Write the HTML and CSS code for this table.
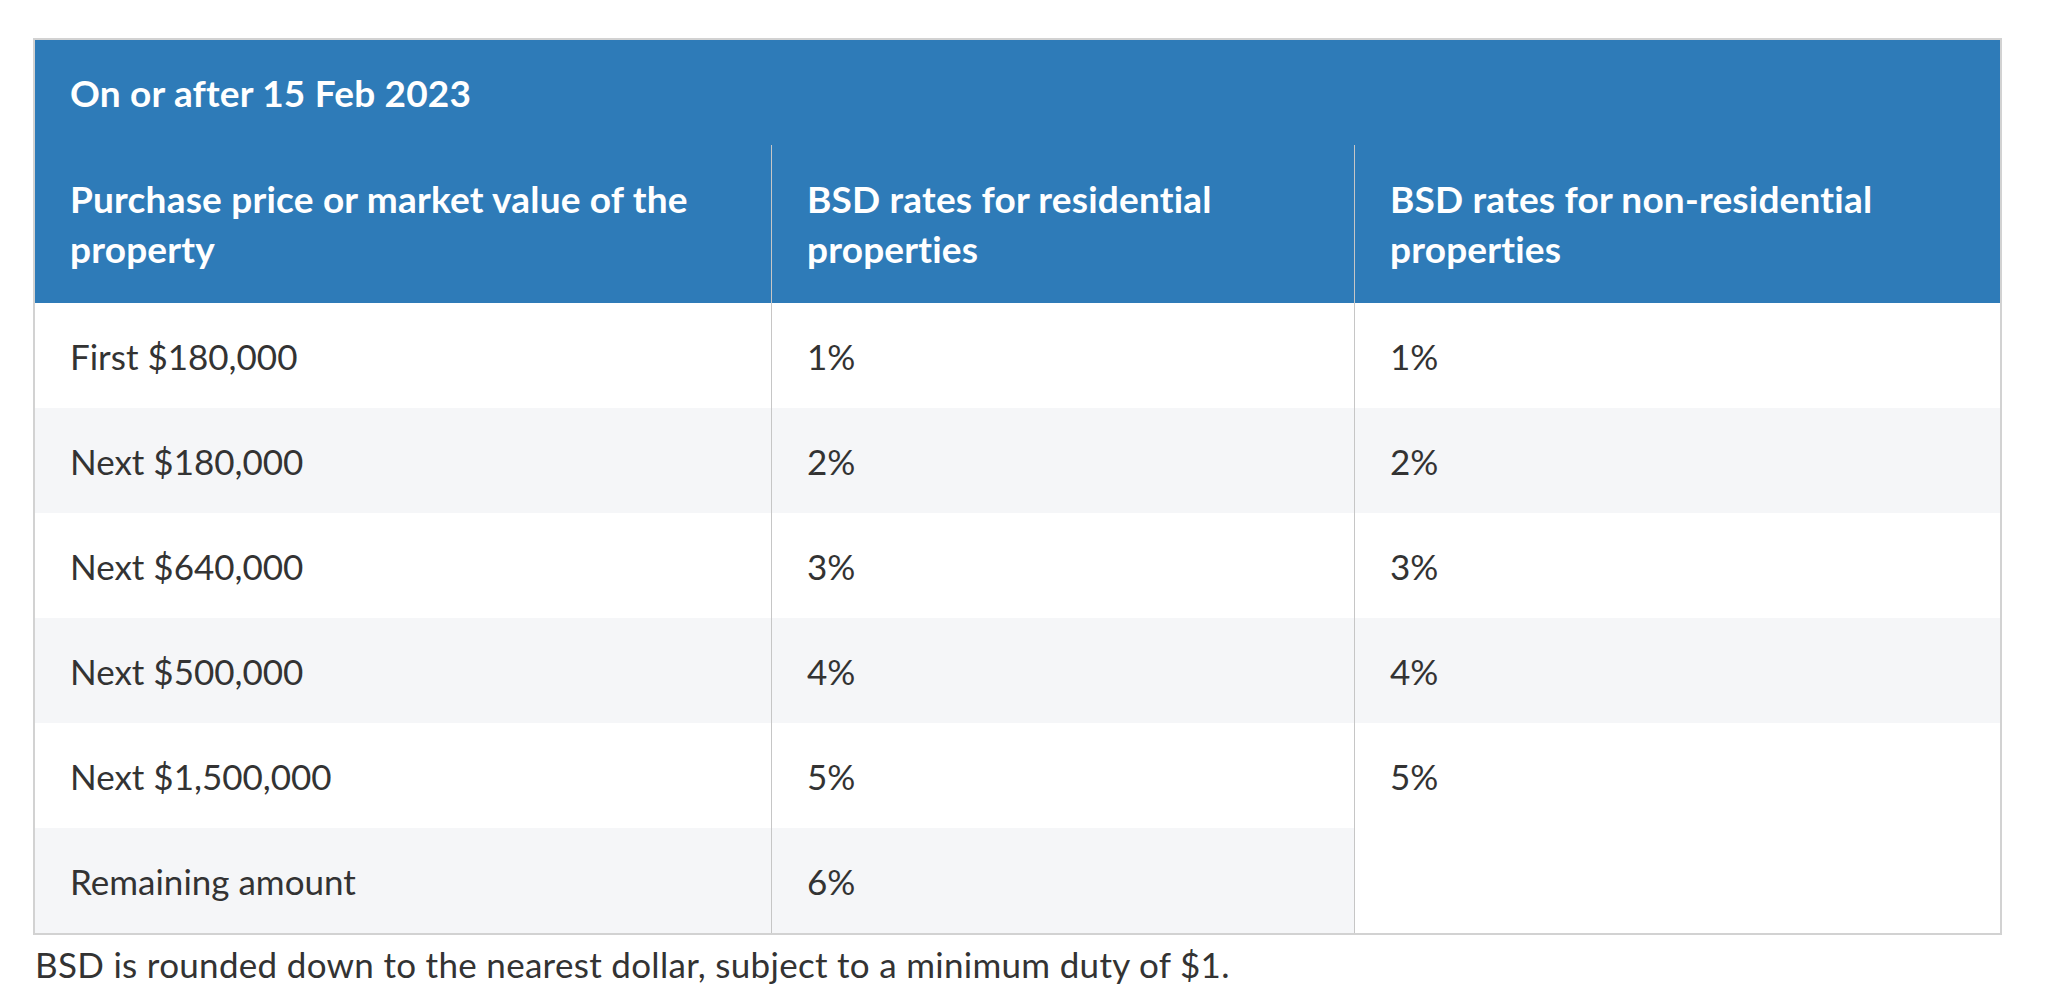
FILE: index.html
```html
<!DOCTYPE html>
<html lang="en">
<head>
<meta charset="utf-8">
<title>BSD rates</title>
<link rel="stylesheet" href="styles.css">
</head>
<body>
<main class="page">
  <table class="rates">
    <colgroup>
      <col class="col-price">
      <col class="col-res">
      <col class="col-nonres">
    </colgroup>
    <thead>
      <tr class="title-row">
        <th colspan="3" class="title-cell">On or after 15 Feb 2023</th>
      </tr>
      <tr class="head-row">
        <th>Purchase price or market value of the<br>property</th>
        <th class="div">BSD rates for residential<br>properties</th>
        <th class="div">BSD rates for non-residential<br>properties</th>
      </tr>
    </thead>
    <tbody>
      <tr>
        <td>First $180,000</td>
        <td class="div">1%</td>
        <td class="div">1%</td>
      </tr>
      <tr class="alt">
        <td>Next $180,000</td>
        <td class="div">2%</td>
        <td class="div">2%</td>
      </tr>
      <tr>
        <td>Next $640,000</td>
        <td class="div">3%</td>
        <td class="div">3%</td>
      </tr>
      <tr class="alt">
        <td>Next $500,000</td>
        <td class="div">4%</td>
        <td class="div">4%</td>
      </tr>
      <tr>
        <td>Next $1,500,000</td>
        <td class="div">5%</td>
        <td class="div span-cell" rowspan="2">5%</td>
      </tr>
      <tr class="alt">
        <td>Remaining amount</td>
        <td class="div">6%</td>
      </tr>
    </tbody>
  </table>
  <p class="note">BSD is rounded down to the nearest dollar, subject to a minimum duty of $1.</p>
</main>
</body>
</html>
```
FILE: styles.css
```css
html, body {
  margin: 0;
  padding: 0;
  background: #ffffff;
}

body {
  font-family: "Lato", "Roboto", "Liberation Sans", sans-serif;
  font-variant-ligatures: none;
  color: #333333;
}

.page {
  padding: 38px 0 0 33px;
}

.rates {
  width: 1969px;
  table-layout: fixed;
  border-collapse: separate;
  border-spacing: 0;
  border: 2px solid #d2d2d2;
  font-size: 35px;
  line-height: 50px;
}

.col-price { width: 736px; }
.col-res { width: 583px; }
.col-nonres { width: 646px; }

.rates th,
.rates td {
  text-align: left;
  vertical-align: top;
  padding: 27.5px 20px 27.5px 35px;
}

.rates thead th {
  background: #2e7bb8;
  color: #ffffff;
  font-weight: 700;
  font-size: 37px;
  letter-spacing: 0.2px;
}

.title-cell {
  padding-bottom: 27.5px;
}

.head-row th {
  padding-top: 29px;
  padding-bottom: 29px;
}

.rates .div {
  border-left: 1px solid #c6c6c6;
}

.rates td {
  font-weight: 400;
  color: #333333;
  background: #ffffff;
}

.rates tr.alt td {
  background: #f5f6f8;
}

.rates tr.alt td.span-cell,
.rates td.span-cell {
  background: #ffffff;
}

.note {
  margin: 4px 0 0 2px;
  font-size: 35px;
  line-height: 50px;
  letter-spacing: 0.3px;
  color: #333333;
}
```
